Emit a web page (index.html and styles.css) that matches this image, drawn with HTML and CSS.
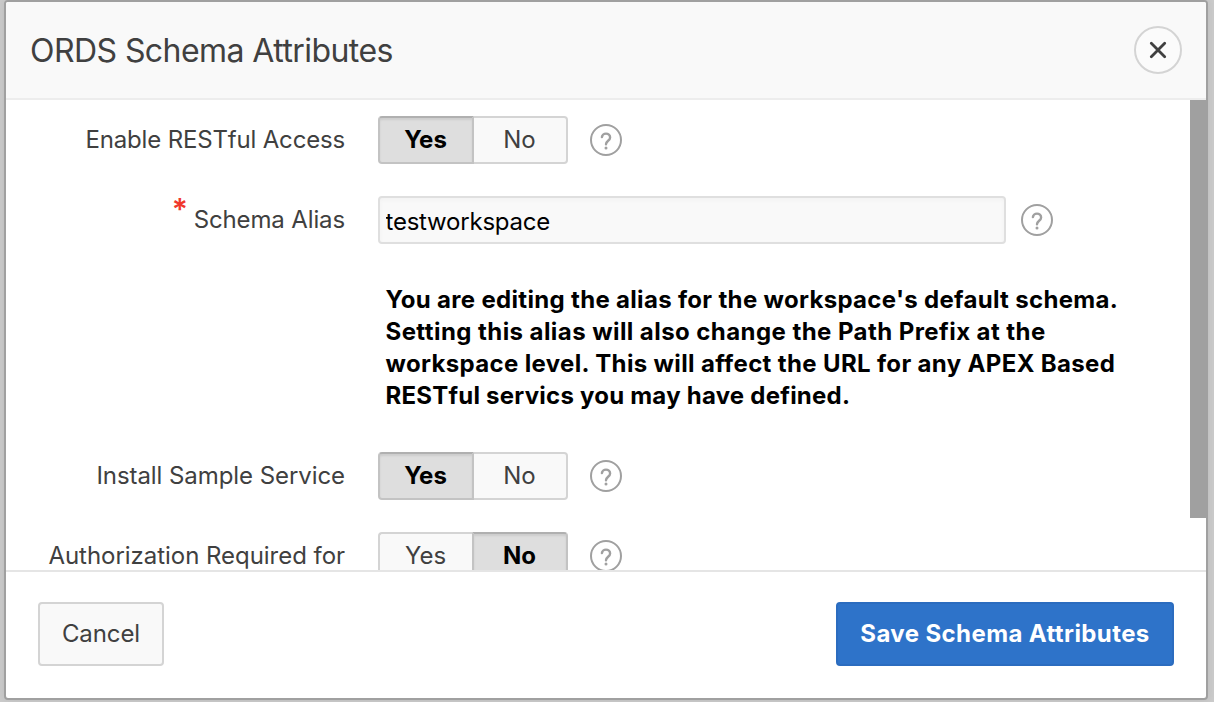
FILE: index.html
```html
<!DOCTYPE html>
<html lang="en">
<head>
<meta charset="utf-8">
<title>ORDS Schema Attributes</title>
<link rel="stylesheet" href="styles.css">
</head>
<body>
<svg width="0" height="0" class="defs">
  <symbol id="help" viewBox="0 0 32 32">
    <circle cx="16" cy="16" r="15" fill="none" stroke="#a0a0a0" stroke-width="2"/>
    <path d="M11.900 13.100A4.100 3.800 0 0 1 16 9.600A4.100 3.900 0 0 1 20.100 13.400C20.100 16.700 16 16.800 16 20.300" fill="none" stroke="#a0a0a0" stroke-width="2.400" stroke-linecap="round"/>
    <circle cx="16" cy="24" r="1.500" fill="#a0a0a0"/>
  </symbol>
</svg>
<div class="dialog">
  <header class="header">
    <h1 class="title">ORDS Schema Attributes</h1>
    <button class="close" aria-label="Close"><svg width="20" height="20" viewBox="0 0 20 20"><path d="M3.300 3.300L16.700 16.700M16.700 3.300L3.300 16.700" stroke="#404040" stroke-width="2.800" stroke-linecap="round"/></svg></button>
  </header>
  <main class="body">
    <div class="form">
      <div class="row">
        <div class="label"><span class="l-enable">Enable RESTful Access</span></div>
        <div class="switch"><span class="opt on first">Yes</span><span class="opt last">No</span></div>
        <svg class="help"><use href="#help"/></svg>
      </div>
      <div class="row">
        <div class="label"><span class="required">*</span><span class="l-alias">Schema Alias</span></div>
        <input class="field" value="testworkspace">
        <svg class="help help-field"><use href="#help"/></svg>
      </div>
      <div class="message">
        <div class="m1">You are editing the alias for the workspace's default schema.</div>
        <div class="m2">Setting this alias will also change the Path Prefix at the</div>
        <div class="m3">workspace level. This will affect the URL for any APEX Based</div>
        <div class="m4">RESTful servics you may have defined.</div>
      </div>
      <div class="row">
        <div class="label"><span class="l-install">Install Sample Service</span></div>
        <div class="switch"><span class="opt on first">Yes</span><span class="opt last">No</span></div>
        <svg class="help"><use href="#help"/></svg>
      </div>
      <div class="row">
        <div class="label"><span class="l-auth">Authorization Required for</span></div>
        <div class="switch"><span class="opt first">Yes</span><span class="opt on last">No</span></div>
        <svg class="help"><use href="#help"/></svg>
      </div>
    </div>
    <div class="track"><div class="thumb"></div></div>
  </main>
  <footer class="footer">
    <button class="btn cancel">Cancel</button>
    <button class="btn save">Save Schema Attributes</button>
  </footer>
</div>
</body>
</html>
```
FILE: styles.css
```css
* { box-sizing: border-box; }
body {
  margin: 0;
  height: 702px;
  padding: 0 6px 2px 4px;
  overflow: hidden;
  background: #cbcbcb;
  font-family: Inter, "Liberation Sans", sans-serif;
  font-size: 24px;
  color: #404040;
}
button, input { font: inherit; color: inherit; }
.defs { position: absolute; }
.dialog {
  width: 1204px;
  height: 700px;
  display: flex;
  flex-direction: column;
  background: #fff;
  border: 2px solid #a0a0a0;
  border-radius: 4px;
  box-shadow: 0 0 8px rgba(0, 0, 0, .08);
  overflow: hidden;
}
.header {
  height: 98px;
  flex: none;
  display: flex;
  align-items: center;
  justify-content: space-between;
  padding: 0 24px;
  background: #f9f9f9;
  border-bottom: 2px solid #ededed;
}
.title { margin: 0; font-size: 32px; font-weight: 400; letter-spacing: -.56px; white-space: nowrap; }
.close {
  width: 48px;
  height: 48px;
  padding: 0;
  display: flex;
  align-items: center;
  justify-content: center;
  border: 2px solid #d4d4d4;
  border-radius: 50%;
  background: #fbfbfb;
}
.body { height: 470px; flex: none; display: flex; overflow: hidden; }
.form { flex: 1; }
.row { height: 80px; display: flex; align-items: center; }
.label { width: 339px; margin-right: 33px; padding-bottom: 2px; display: flex; justify-content: flex-end; white-space: nowrap; }
.l-enable { letter-spacing: -.17px; }
.l-alias { letter-spacing: -.13px; }
.l-install { letter-spacing: -.07px; }
.l-auth { letter-spacing: -.04px; }
.required { margin: -12px 7px 0 0; width: 15px; font-size: 30px; line-height: 32px; font-weight: 600; color: #f0382c; }
.switch { display: flex; width: 190px; height: 48px; }
.opt {
  flex: 1;
  display: flex;
  align-items: center;
  justify-content: center;
  padding: 0 1px 2px 0;
  background: #f9f9f9;
  border: 2px solid #d4d4d4;
}
.first { border-radius: 4px 0 0 4px; border-right-width: 0; }
.last { border-radius: 0 4px 4px 0; border-left-width: 0; }
.on {
  flex: 0 0 96px;
  background: #dedede;
  border: 2px solid #c3c3c3;
  border-top-color: #b0b0b0;
  color: #000;
  font-weight: 700;
  box-shadow: inset 0 2px 2px rgba(0, 0, 0, .08);
}
.help { width: 32px; height: 32px; margin-left: 22px; }
.help-field { margin-left: 15px; }
.field {
  width: 628px;
  height: 48px;
  padding: 2px 6px 0 5.5px;
  border: 2px solid #dfdfdf;
  border-radius: 4px;
  background: #f9f9f9;
  color: #000;
  letter-spacing: -.22px;
  outline: 0;
  box-shadow: inset 0 2px 4px rgba(0, 0, 0, .03);
}
.message { height: 176px; padding: 24px 0 0 379.5px; color: #000; font-weight: 700; line-height: 32px; white-space: nowrap; }
.m1 { letter-spacing: .32px; }
.m2 { letter-spacing: .43px; }
.m3 { letter-spacing: .35px; }
.m4 { letter-spacing: .23px; }
.track { width: 16px; }
.thumb { height: 418px; background: #a0a0a0; }
.footer {
  height: 128px;
  flex: none;
  display: flex;
  align-items: center;
  justify-content: space-between;
  padding: 0 32px 2px;
  border-top: 2px solid #e5e5e5;
}
.btn { height: 64px; padding: 0 0 2px; border-radius: 4px; white-space: nowrap; }
.cancel { width: 126px; border: 2px solid #d4d4d4; background: #f9f9f9; letter-spacing: -.1px; }
.save { width: 338px; border: 2px solid #2b6cbf; background: #2e73c9; color: #fff; font-weight: 700; letter-spacing: .4px; }
```
